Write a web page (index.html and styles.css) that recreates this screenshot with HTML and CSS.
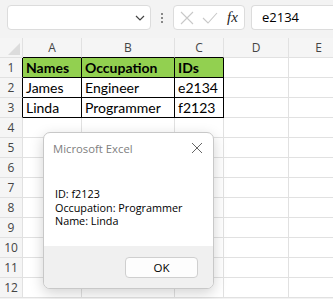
FILE: index.html
```html
<!DOCTYPE html>
<html lang="en">
<head>
    <meta charset="UTF-8">
    <title>Excel - MsgBox</title>
    <link rel="stylesheet" href="styles.css">
</head>
<body>
    <div class="toolbar">
        <div class="name-box">
            <svg class="chevron" width="10" height="6" viewBox="0 0 10 6"><polyline points="1,1 5,5 9,1" fill="none" stroke="#444" stroke-width="1.2"/></svg>
        </div>
        <div class="grip"><span></span><span></span><span></span></div>
        <div class="fx-box">
            <svg width="14" height="14" viewBox="0 0 14 14"><path d="M1 1 L13 13 M13 1 L1 13" stroke="#c8c8c8" stroke-width="1.1"/></svg>
            <svg width="16" height="12" viewBox="0 0 16 12"><polyline points="1,6 6,11 15,1" fill="none" stroke="#c8c8c8" stroke-width="1.1"/></svg>
            <span class="fx">fx</span>
        </div>
        <div class="formula">e2134</div>
    </div>

    <div class="sheet">
        <div class="ch corner"><span class="tri"></span></div>
        <div class="ch edge">A</div><div class="ch edge">B</div><div class="ch edge">C</div><div class="ch">D</div><div class="ch">E</div>

        <div class="rh edge">1</div>
        <div class="cell hd">Names</div><div class="cell hd">Occupation</div><div class="cell hd">IDs</div><div class="cell"></div><div class="cell"></div>

        <div class="rh edge">2</div>
        <div class="cell box">James</div><div class="cell box">Engineer</div><div class="cell box">e2134</div><div class="cell"></div><div class="cell"></div>

        <div class="rh edge">3</div>
        <div class="cell box">Linda</div><div class="cell box">Programmer</div><div class="cell box">f2123</div><div class="cell"></div><div class="cell"></div>

        <div class="rh">4</div><div class="cell"></div><div class="cell"></div><div class="cell"></div><div class="cell"></div><div class="cell"></div>
        <div class="rh">5</div><div class="cell"></div><div class="cell"></div><div class="cell"></div><div class="cell"></div><div class="cell"></div>
        <div class="rh">6</div><div class="cell"></div><div class="cell"></div><div class="cell"></div><div class="cell"></div><div class="cell"></div>
        <div class="rh">7</div><div class="cell"></div><div class="cell"></div><div class="cell"></div><div class="cell"></div><div class="cell"></div>
        <div class="rh">8</div><div class="cell"></div><div class="cell"></div><div class="cell"></div><div class="cell"></div><div class="cell"></div>
        <div class="rh">9</div><div class="cell"></div><div class="cell"></div><div class="cell"></div><div class="cell"></div><div class="cell"></div>
        <div class="rh">10</div><div class="cell"></div><div class="cell"></div><div class="cell"></div><div class="cell"></div><div class="cell"></div>
        <div class="rh">11</div><div class="cell"></div><div class="cell"></div><div class="cell"></div><div class="cell"></div><div class="cell"></div>
        <div class="rh">12</div><div class="cell"></div><div class="cell"></div><div class="cell"></div><div class="cell"></div><div class="cell"></div>
    </div>

    <div class="dialog">
        <div class="dialog-title">
            <span>Microsoft Excel</span>
            <svg width="12" height="12" viewBox="0 0 12 12"><path d="M1 1 L11 11 M11 1 L1 11" stroke="#666" stroke-width="1"/></svg>
        </div>
        <div class="dialog-body">
            <p>ID: f2123</p>
            <p>Occupation: Programmer</p>
            <p>Name: Linda</p>
        </div>
        <div class="dialog-foot">
            <button class="btn">OK</button>
        </div>
    </div>
</body>
</html>
```

FILE: styles.css
```css
body {
    margin: 0;
    width: 333px;
    height: 299px;
    overflow: hidden;
    background-color: #f3f3f3;
    font-family: "Open Sans", "Noto Sans", sans-serif;
    color: #000;
    position: relative;
}
.toolbar {
    display: flex;
    align-items: center;
    height: 38px;
    padding: 0 0 3px 7px;
    box-sizing: border-box;
}
.name-box {
    width: 144px;
    height: 25px;
    box-sizing: border-box;
    background-color: #fff;
    border: 1px solid #dcdcdc;
    border-radius: 4px;
    display: flex;
    align-items: center;
    justify-content: flex-end;
    padding-right: 5px;
}
.grip {
    width: 22px;
    display: flex;
    flex-direction: column;
    align-items: center;
    gap: 2px;
}
.grip span {
    width: 2px;
    height: 2px;
    background-color: #888;
}
.fx-box {
    width: 72px;
    height: 25px;
    box-sizing: border-box;
    background-color: #fff;
    border: 1px solid #dcdcdc;
    border-radius: 4px;
    display: flex;
    align-items: center;
    gap: 8px;
    padding-left: 6px;
}
.fx {
    font-family: "Liberation Serif", serif;
    font-style: italic;
    font-size: 15px;
    color: #222;
    margin-left: 1px;
}
.formula {
    flex: 1;
    margin-left: 6px;
    height: 25px;
    box-sizing: border-box;
    background-color: #fff;
    border: 1px solid #dcdcdc;
    border-right: none;
    border-radius: 4px 0 0 4px;
    padding-left: 10px;
    font-size: 13px;
    line-height: 23px;
}

/* grid */
.sheet {
    display: grid;
    grid-template-columns: 23px 59px 93px 49px 65px 60px;
    grid-auto-rows: 20px;
    font-family: "Lato", "Liberation Sans", sans-serif;
    font-size: 14px;
}
.sheet > div {
    box-sizing: border-box;
    border-right: 1px solid #e1e1e1;
    border-bottom: 1px solid #e1e1e1;
    white-space: nowrap;
    overflow: hidden;
    line-height: 19px;
}
.ch,
.rh {
    background-color: #f5f5f5;
    font-family: "Open Sans", sans-serif;
    font-size: 12px;
    color: #444;
    text-align: center;
}
.cell {
    background-color: #fff;
    padding: 0 3px;
}
.sheet > .edge {
    border-bottom-color: #000;
}
.sheet > .rh.edge {
    border-right-color: #000;
    border-bottom-color: #e1e1e1;
}
.sheet > .rh:nth-child(18) {
    border-bottom-color: #e1e1e1;
}
.sheet > .hd,
.sheet > .box {
    border-right-color: #000;
    border-bottom-color: #000;
}
.hd {
    background-color: #92d050;
    font-weight: bold;
}
.corner {
    position: relative;
}
.tri {
    position: absolute;
    right: 2px;
    bottom: 2px;
    width: 0;
    height: 0;
    border-left: 12px solid transparent;
    border-bottom: 12px solid #dcdcdc;
}

/* msgbox */
.dialog {
    position: absolute;
    left: 43px;
    top: 132px;
    width: 171px;
    height: 157px;
    box-sizing: border-box;
    background-color: #fff;
    border: 1px solid #c8c8c8;
    border-radius: 7px;
    box-shadow: 0 4px 14px rgba(0, 0, 0, 0.18);
    overflow: hidden;
    display: flex;
    flex-direction: column;
    font-family: "Open Sans", sans-serif;
    font-size: 10.8px;
}
.dialog-title {
    display: flex;
    justify-content: space-between;
    align-items: center;
    height: 30px;
    padding: 0 10px 0 9px;
    color: #808080;
    font-size: 11.3px;
}
.dialog-body {
    flex: 1;
    padding: 24px 0 0 11px;
}
.dialog-body p {
    margin: 0;
    line-height: 13.5px;
}
.dialog-foot {
    height: 42px;
    background-color: #f0f0f0;
    display: flex;
    justify-content: flex-end;
    align-items: center;
    padding-right: 15px;
}
.btn {
    width: 73px;
    height: 21px;
    background-color: #fdfdfd;
    border: 1px solid #cfcfcf;
    border-radius: 4px;
    font-family: "Open Sans", sans-serif;
    font-size: 11.5px;
    color: #000;
    padding: 0;
}
```
